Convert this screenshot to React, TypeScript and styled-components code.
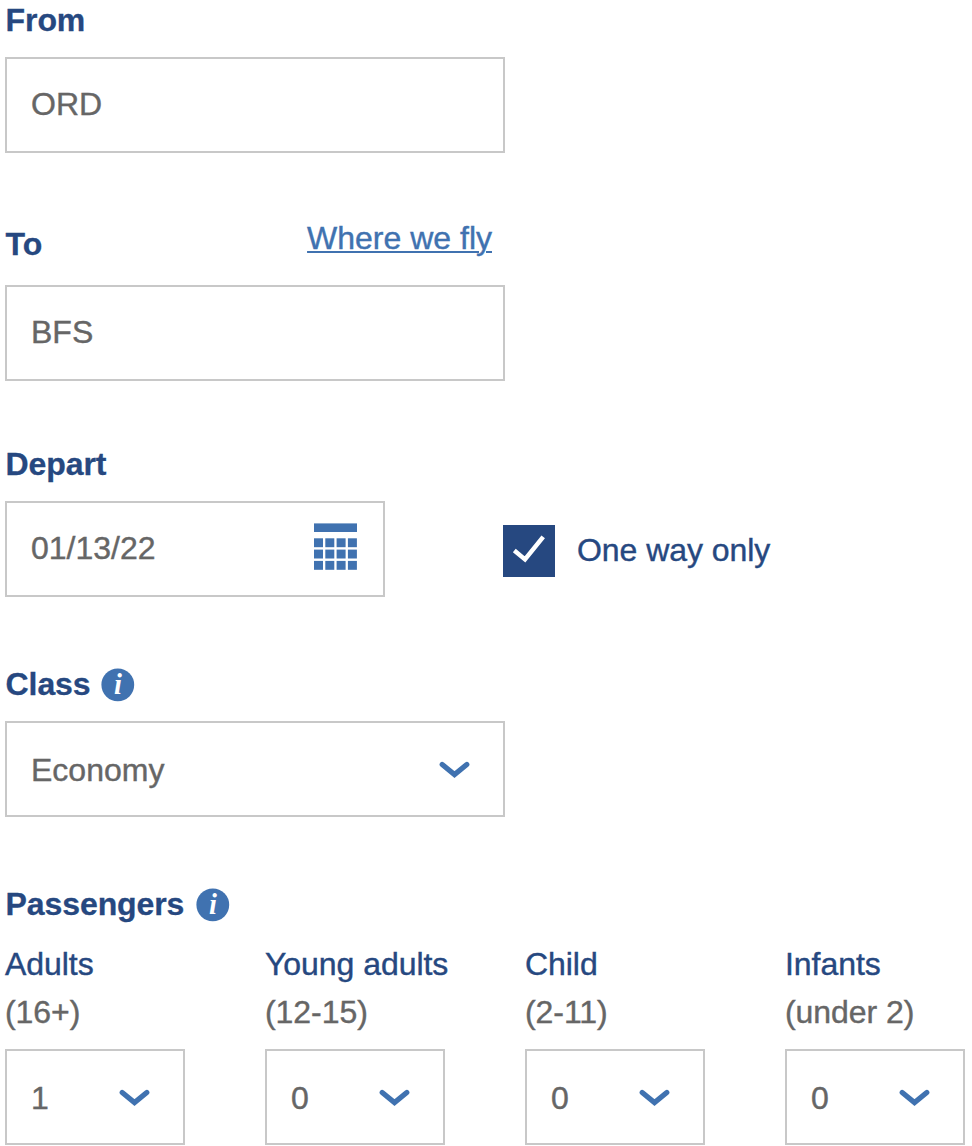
import React from "react";
import styled, { createGlobalStyle } from "styled-components";

const navy = "#264880";
const blue = "#4072b0";
const grey = "#666666";

const GlobalStyle = createGlobalStyle`
  * { box-sizing: border-box; }
  body {
    margin: 0;
    background: #fff;
    font-family: "Liberation Sans", Arial, sans-serif;
    font-size: 32px;
    line-height: 36px;
    color: ${grey};
  }
`;

const Form = styled.form`
  display: flex;
  flex-direction: column;
  align-items: flex-start;
  width: 972px;
  height: 1146px;
  padding: 2px 0 0 5px;
  overflow: hidden;
`;

const Field = styled.div<{ $gap: number; $before?: number }>`
  display: flex;
  flex-direction: column;
  gap: ${(p) => p.$gap}px;
  margin-top: ${(p) => p.$before ?? 0}px;
`;

const LabelRow = styled.div`
  display: flex;
  justify-content: space-between;
  align-items: flex-end;
  width: 500px;
  padding-right: 13px;
`;

const Label = styled.div`
  display: flex;
  align-items: center;
  height: 36px;
  padding-left: 0.6px;
  color: ${navy};
  font-weight: 700;
  letter-spacing: -0.1px;
  -webkit-text-stroke: 0.3px ${navy};
`;

const RouteLink = styled.a`
  height: 36px;
  margin-bottom: 6px;
  color: ${blue};
  text-decoration: underline;
  text-decoration-thickness: 2px;
  text-underline-offset: 2px;
  -webkit-text-stroke: 0.4px ${blue};
`;

const Box = styled.div<{ $width: number; $select?: boolean }>`
  display: flex;
  justify-content: space-between;
  align-items: flex-start;
  width: ${(p) => p.$width}px;
  height: 96px;
  padding: ${(p) => (p.$select ? "29px 32px 0 24px" : "27px 25px 0 24px")};
  border: 2px solid #c8c8c8;
  background: #fff;
`;

const Value = styled.span`
  -webkit-text-stroke: 0.4px ${grey};
`;

const ChevronSvg = styled.svg`
  margin-top: 9px;
`;

const CalendarSvg = styled.svg`
  margin-top: -7px;
`;

const InfoSvg = styled.svg<{ $gap: number }>`
  margin: 2px 0 0 ${(p) => p.$gap}px;
`;

const DateRow = styled.div`
  display: flex;
  align-items: flex-start;
`;

const CheckOption = styled.div`
  display: flex;
  align-items: center;
  gap: 22px;
  margin: 24px 0 0 118px;
  height: 52px;
`;

const CheckBox = styled.div`
  width: 52px;
  height: 52px;
  background: ${navy};
`;

const CheckLabel = styled.span`
  padding-bottom: 2px;
  color: ${navy};
  letter-spacing: -0.05px;
  -webkit-text-stroke: 0.4px ${navy};
`;

const PassengerGrid = styled.div`
  display: grid;
  grid-template-columns: repeat(4, 180px);
  column-gap: 80px;
`;

const Passenger = styled.div`
  display: flex;
  flex-direction: column;
`;

const Caption = styled.div<{ $color: string }>`
  height: 36px;
  margin-bottom: ${(p) => (p.$color === navy ? 12 : 19)}px;
  white-space: nowrap;
  letter-spacing: -0.05px;
  color: ${(p) => p.$color};
  -webkit-text-stroke: 0.4px ${(p) => p.$color};
`;

const Chevron = () => (
  <ChevronSvg width="32" height="19" viewBox="0 0 32 19" fill="none">
    <path d="M3.2 3.4 15.5 13.6 27.8 3.4" stroke={blue} strokeWidth="5.2" strokeLinecap="round" />
  </ChevronSvg>
);

const Info = ({ gap }: { gap: number }) => (
  <InfoSvg $gap={gap} width="34" height="34" viewBox="0 0 34 34">
    <circle cx="16.8" cy="16.8" r="16.4" fill={blue} />
    <text
      x="16.8"
      y="26.4"
      textAnchor="middle"
      fill="#fff"
      fontFamily='"Liberation Serif", serif'
      fontSize="28.5"
      fontStyle="italic"
      fontWeight="700"
    >
      i
    </text>
  </InfoSvg>
);

const Calendar = () => (
  <CalendarSvg width="44" height="48" viewBox="0 0 44 48" fill={blue}>
    <rect x="0" y="0.4" width="43" height="8.6" />
    {[15.3, 26.6, 37.9].map((y) =>
      [0, 11.3, 22.6, 33.9].map((x) => <rect key={`${x}-${y}`} x={x} y={y} width="9" height="8.9" />)
    )}
  </CalendarSvg>
);

const passengers = [
  { name: "Adults", ages: "(16+)", count: 1 },
  { name: "Young adults", ages: "(12-15)", count: 0 },
  { name: "Child", ages: "(2-11)", count: 0 },
  { name: "Infants", ages: "(under 2)", count: 0 },
];

export default function App() {
  return (
    <>
      <GlobalStyle />
      <Form>
        <Field $gap={19}>
          <Label>From</Label>
          <Box $width={500}><Value>ORD</Value></Box>
        </Field>

        <Field $gap={23} $before={67}>
          <LabelRow>
            <Label>To</Label>
            <RouteLink>Where we fly</RouteLink>
          </LabelRow>
          <Box $width={500}><Value>BFS</Value></Box>
        </Field>

        <Field $gap={19} $before={65}>
          <Label>Depart</Label>
          <DateRow>
            <Box $width={380}>
              <Value>01/13/22</Value>
              <Calendar />
            </Box>
            <CheckOption>
              <CheckBox>
                <svg width="52" height="52" viewBox="0 0 52 52" fill="none">
                  <path d="M11.3 25.6 22 34.4 40.2 11.8" stroke="#fff" strokeWidth="4.5" />
                </svg>
              </CheckBox>
              <CheckLabel>One way only</CheckLabel>
            </CheckOption>
          </DateRow>
        </Field>

        <Field $gap={19} $before={69}>
          <Label>Class<Info gap={10.5} /></Label>
          <Box $width={500} $select>
            <Value>Economy</Value>
            <Chevron />
          </Box>
        </Field>

        <Field $gap={24} $before={69}>
          <Label>Passengers<Info gap={11.6} /></Label>
          <PassengerGrid>
            {passengers.map((p) => (
              <Passenger key={p.name}>
                <Caption $color={navy}>{p.name}</Caption>
                <Caption $color={grey}>{p.ages}</Caption>
                <Box $width={180} $select>
                  <Value>{p.count}</Value>
                  <Chevron />
                </Box>
              </Passenger>
            ))}
          </PassengerGrid>
        </Field>
      </Form>
    </>
  );
}
